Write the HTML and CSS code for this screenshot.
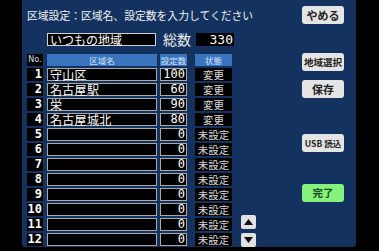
FILE: index.html
```html
<!DOCTYPE html>
<html lang="ja">
<head>
    <meta charset="UTF-8">
    <meta name="viewport" content="width=device-width, initial-scale=1.0">
    <title>区域設定</title>
    <link rel="stylesheet" href="styles.css">
</head>
<body>
    <div class="panel">
        <div class="main">
            <h1 class="title">区域設定：区域名、設定数を入力してください</h1>

            <div class="summary">
                <div class="name-field">いつもの地域</div>
                <span class="total-label">総数</span>
                <div class="total-value">330</div>
            </div>

            <!-- Area table -->
            <div class="area-table">
                <div class="th c-no">No.</div>
                <div class="th c-name">区域名</div>
                <div class="th c-count">設定数</div>
                <div class="th c-state">状態</div>
                <div></div>

                <div class="c-no">1</div><div class="c-name field">守山区</div><div class="c-count field">100</div><div class="c-state">変更</div><div></div>
                <div class="c-no">2</div><div class="c-name field">名古屋駅</div><div class="c-count field">60</div><div class="c-state">変更</div><div></div>
                <div class="c-no">3</div><div class="c-name field">栄</div><div class="c-count field">90</div><div class="c-state">変更</div><div></div>
                <div class="c-no">4</div><div class="c-name field">名古屋城北</div><div class="c-count field">80</div><div class="c-state">変更</div><div></div>
                <div class="c-no">5</div><div class="c-name field"></div><div class="c-count field">0</div><div class="c-state">未設定</div><div></div>
                <div class="c-no">6</div><div class="c-name field"></div><div class="c-count field">0</div><div class="c-state">未設定</div><div></div>
                <div class="c-no">7</div><div class="c-name field"></div><div class="c-count field">0</div><div class="c-state">未設定</div><div></div>
                <div class="c-no">8</div><div class="c-name field"></div><div class="c-count field">0</div><div class="c-state">未設定</div><div></div>
                <div class="c-no">9</div><div class="c-name field"></div><div class="c-count field">0</div><div class="c-state">未設定</div><div></div>
                <div class="c-no">10</div><div class="c-name field"></div><div class="c-count field">0</div><div class="c-state">未設定</div><div></div>
                <div class="c-no">11</div><div class="c-name field"></div><div class="c-count field">0</div><div class="c-state">未設定</div>
                <div class="c-arrow arrow-up">
                    <svg width="9" height="6" viewBox="0 0 9 6"><polygon points="4.5,0 9,6 0,6" fill="#111"/></svg>
                </div>
                <div class="c-no">12</div><div class="c-name field"></div><div class="c-count field">0</div><div class="c-state">未設定</div>
                <div class="c-arrow arrow-down">
                    <svg width="9" height="6" viewBox="0 0 9 6"><polygon points="0,0 9,0 4.5,6" fill="#111"/></svg>
                </div>
            </div>
        </div>

        <div class="side">
            <div class="btn btn-quit">やめる</div>
            <div class="btn btn-select">地域選択</div>
            <div class="btn btn-save">保存</div>
            <div class="btn btn-usb">USB 読込</div>
            <div class="btn btn-done">完了</div>
        </div>
    </div>
</body>
</html>
```

FILE: styles.css
```css
html, body {
    margin: 0;
    padding: 0;
    height: 100%;
    overflow: hidden;
}

body {
    background-color: black;
    font-family: "Noto Sans CJK JP", "Noto Sans", sans-serif;
    color: white;
}

.panel {
    margin-left: 22px;
    width: 334px;
    height: 247px;
    box-sizing: border-box;
    padding: 0 12px 0 5px;
    background-color: #14325f;
    border-bottom-left-radius: 3px;
    border-bottom-right-radius: 3px;
    display: flex;
}

.main {
    width: 229px;
}

.title {
    margin: 0;
    padding-top: 6px;
    height: 18px;
    line-height: 18px;
    font-size: 10.8px;
    font-weight: normal;
    white-space: nowrap;
    color: #f2f2f2;
}

/* Name + total row */
.summary {
    display: flex;
    align-items: center;
    margin-top: 9px;
    height: 13px;
}

.name-field {
    margin-left: 20px;
    width: 109px;
    height: 13px;
    box-sizing: border-box;
    border: 1px solid #cfcfcf;
    background-color: black;
    font-size: 12px;
    line-height: 11px;
    padding-left: 2px;
    white-space: nowrap;
}

.total-label {
    margin-left: 7px;
    font-size: 14px;
    line-height: 13px;
    color: #eee;
}

.total-value {
    margin-left: 5px;
    width: 38px;
    height: 13px;
    background-color: black;
    font-family: "DejaVu Sans Mono", monospace;
    font-size: 13px;
    line-height: 13px;
    text-align: right;
    padding-right: 1px;
    box-sizing: border-box;
}

/* Table */
.area-table {
    margin-top: 8px;
    display: grid;
    grid-template-columns: 16px 114px 30px 45px 24px;
    grid-template-rows: 12px;
    grid-auto-rows: 13px;
    row-gap: 2px;
}

.area-table > div {
    box-sizing: border-box;
    white-space: nowrap;
}

.th {
    background-color: #3a74bf;
    color: #d3e2f6;
    font-size: 8.5px;
    line-height: 12px;
    text-align: center;
}

.c-no {
    background-color: black;
    text-align: right;
    font-family: "DejaVu Sans Mono", monospace;
    font-weight: bold;
    font-size: 12px;
    line-height: 13px;
    padding-right: 1px;
}

.th.c-no {
    font-family: "DejaVu Sans", sans-serif;
    font-weight: normal;
    font-size: 8px;
    line-height: 12px;
    text-align: center;
    padding: 0;
}

.c-name {
    margin-left: 4px;
}

.c-count {
    margin-left: 3px;
}

.c-state {
    margin-left: 8px;
    background-color: black;
    color: #d8d8d8;
    font-size: 10.5px;
    line-height: 13px;
    text-align: center;
}

.th.c-state {
    background-color: #3a74bf;
    color: #d3e2f6;
    font-size: 8.5px;
    line-height: 12px;
}

.field {
    background-color: black;
    border: 1px solid #a8a8a8;
}

.c-name.field {
    font-size: 12px;
    line-height: 11px;
    padding-left: 2px;
    letter-spacing: 0.3px;
}

.c-count.field {
    font-family: "DejaVu Sans Mono", monospace;
    font-size: 12px;
    line-height: 11px;
    text-align: right;
    padding-right: 1px;
}

.c-arrow {
    margin-left: 9px;
    height: 14px;
    background-color: #e2e2e2;
    border-radius: 2px;
    display: flex;
    align-items: center;
    justify-content: center;
}

.arrow-up {
    margin-top: -3px;
}

/* Right-hand buttons */
.side {
    margin-left: 46px;
    width: 42px;
    padding-top: 6px;
    display: flex;
    flex-direction: column;
}

.btn {
    height: 18px;
    background-color: #e4e4e4;
    border-radius: 3px;
    color: #222;
    font-weight: bold;
    font-size: 10px;
    line-height: 18px;
    text-align: center;
    white-space: nowrap;
}

.btn-quit {
    font-size: 11px;
}

.btn-select {
    margin-top: 29px;
    font-size: 9.5px;
}

.btn-save {
    margin-top: 9px;
    font-size: 11px;
}

.btn-usb {
    margin-top: 36px;
    font-size: 8.5px;
}

.btn-done {
    margin-top: 32px;
    background-color: #84f27c;
    color: #1d4d1d;
    font-size: 10.5px;
}
```
